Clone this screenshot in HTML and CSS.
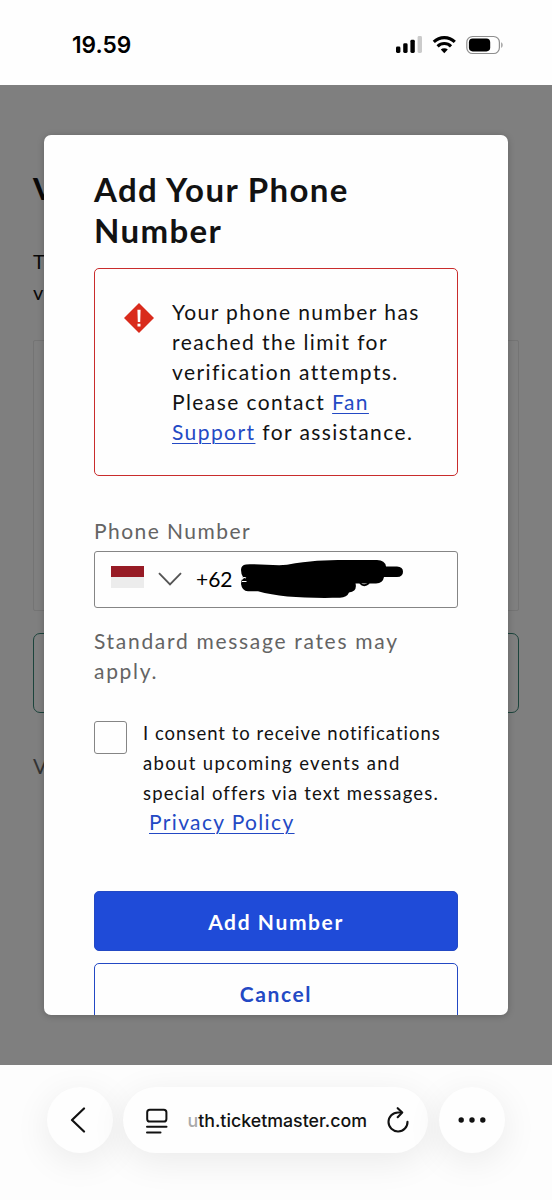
FILE: index.html
```html
<!DOCTYPE html>
<html lang="en">
<head>
<meta charset="utf-8">
<title>Add Your Phone Number</title>
<link rel="stylesheet" href="styles.css">
</head>
<body>
<header class="status">
  <span class="time">19.59</span>
  <svg class="status-icons" width="110" height="20" viewBox="0 0 110 20">
    <rect x="0" y="11.5" width="4.4" height="6.500" rx="1.4"/>
    <rect x="7.200" y="8.3" width="4.4" height="9.700" rx="1.4"/>
    <rect x="14.400" y="4.8" width="4.4" height="13.200" rx="1.4"/>
    <rect x="21.600" y="1" width="4.4" height="17" rx="1.4" fill="#cbcbcb"/>
    <g fill="none" stroke="#000" stroke-width="3.1">
      <path d="M37.800 6.9a15 15 0 0 1 21 0"/>
      <path d="M41.600 11.300a9.500 9.500 0 0 1 13.400 0"/>
    </g>
    <path d="M44.800 14.600a4.900 4.900 0 0 1 7 0L48.300 18.300z"/>
    <rect x="70.800" y="1.500" width="32.600" height="17" rx="5.800" fill="none" stroke="#8e8e8e" stroke-width="1.200"/>
    <rect x="72.900" y="3.600" width="21.300" height="12.800" rx="3.800"/>
    <path d="M105.200 7.200c1.900.6 1.900 5 0 5.600z" fill="#999"/>
  </svg>
</header>

<main class="page">
  <div class="behind">
    <h2 class="behind-title">V</h2>
    <p class="behind-text">T<br>v</p>
    <div class="behind-card"></div>
    <div class="behind-button"></div>
    <p class="behind-note">V</p>
  </div>

  <section class="modal">
    <h1 class="title">Add Your Phone<br>Number</h1>
    <div class="alert">
      <svg class="alert-icon" width="30" height="30" viewBox="0 0 30 30">
        <path d="M15 0 30 15 15 30 0 15z" fill="#d92b1c"/>
        <path d="M13.400 6.800h3.200l-.4 12.200h-2.400z" fill="#fff"/>
        <rect x="13.500" y="20.700" width="3" height="2.800" fill="#fff"/>
      </svg>
      <p class="alert-text">Your phone number has<br>reached the limit for<br>verification attempts.<br>Please contact <a>Fan</a><br><a>Support</a> for assistance.</p>
    </div>
    <label class="label">Phone Number</label>
    <div class="field">
      <span class="flag"></span>
      <svg class="chevron" width="24" height="14" viewBox="0 0 24 14"><path d="M1 1.200 12 12.400 23 1.200" fill="none" stroke="#555" stroke-width="1.900"/></svg>
      <span class="code">+62</span>
      <svg class="scribble" width="164" height="40" viewBox="0 0 164 40">
        <path d="M6 5.500C20 4.500 34 7 47 5.800C70 1.500 85 1 105 1H137Q145 1 146 7.500H157Q163 8 163 12.700Q163 17.800 157 18H144Q143 24 136 24.500H115.500Q117.500 32 109 33.500Q107 38.500 100 38.800C65 39.500 38 38 18 32.300H8Q2 32 1 25Q1 21 3 18Q1 15 1 11Q1 6 6 5.500Z"/>
        <path d="M2 20.500q1.500-3 4-1.500M2 22.500h4.500" fill="none" stroke="#fff" stroke-width="1.100"/>
        <path d="M120 24q4 4.500 9 0" fill="none" stroke="#000" stroke-width="1.800"/>
      </svg>
    </div>
    <p class="hint">Standard message rates may<br>apply.</p>
    <div class="consent">
      <span class="checkbox"></span>
      <div>
        <p class="consent-text">I consent to receive notifications<br><span class="wide">about upcoming events and</span><br><span class="mid">special offers via text messages.</span></p>
        <a class="privacy">Privacy Policy</a>
      </div>
    </div>
    <div class="actions">
      <div class="btn primary">Add Number</div>
      <div class="btn secondary">Cancel</div>
    </div>
  </section>
</main>

<footer class="toolbar">
  <div class="round">
    <svg width="16" height="26" viewBox="0 0 16 26"><path d="M14 1.500 2 13 14 24.500" fill="none" stroke="#111" stroke-width="2.200" stroke-linecap="round" stroke-linejoin="round"/></svg>
  </div>
  <div class="address">
    <svg class="reader" width="22" height="26" viewBox="0 0 22 26" fill="none" stroke="#111" stroke-width="2" stroke-linecap="round">
      <rect x="1.200" y="1.700" width="19.200" height="11.800" rx="2.600"/>
      <path d="M1 18.800H20.500M1 24.500H14.500"/>
    </svg>
    <span class="url"><span class="fade">u</span>th.ticketmaster.com</span>
    <svg class="reload" width="22" height="26" viewBox="0 0 22 26" fill="none" stroke="#111" stroke-width="2.100" stroke-linecap="round" stroke-linejoin="round">
      <path d="M14.500 5.500H11A9.500 9.500 0 1 0 20.500 14.700"/>
      <path d="M10.700 1.200 15.200 5.600 10.700 10.200"/>
    </svg>
  </div>
  <div class="round">
    <svg width="28" height="6" viewBox="0 0 28 6" fill="#111"><circle cx="3.200" cy="3" r="2.700"/><circle cx="14" cy="3" r="2.700"/><circle cx="24.800" cy="3" r="2.700"/></svg>
  </div>
</footer>
</body>
</html>
```
FILE: styles.css
```css
* { box-sizing: border-box; margin: 0; padding: 0; }
body {
  width: 552px;
  height: 1200px;
  overflow: hidden;
  background: #fefefe;
  color: #121212;
  font-family: Lato, "Open Sans", sans-serif;
  font-size: 21px;
  line-height: 30px;
}
.status {
  height: 85px;
  display: flex;
  justify-content: space-between;
  padding: 30px 46px 0 72px;
}
.time {
  font: 600 22.7px/30px Inter, sans-serif;
  color: #000;
}
.status-icons { margin-top: 5px; }

.page {
  position: relative;
  height: 980px;
  background: #7f7f7f;
  overflow: hidden;
}
.behind { padding: 85px 33px 0; }
.behind-title { font-size: 30px; line-height: 36px; font-weight: 900; color: #090909; }
.behind-text { margin-top: 40px; line-height: 31px; color: #090909; font-size: 20px; }
.behind-card { margin-top: 32px; height: 271px; border: 1px solid #747474; border-radius: 2px; }
.behind-button { margin-top: 22px; height: 80px; border: 1.5px solid #1c443c; border-radius: 7px; }
.behind-note { margin-top: 38px; color: #333; }

.modal {
  position: absolute;
  left: 44px;
  top: 50px;
  width: 464px;
  height: 880px;
  padding: 34px 50px 0;
  background: #fefefe;
  border-radius: 7px;
  box-shadow: 0 1px 7px rgba(0, 0, 0, .22);
  overflow: hidden;
}
.title {
  font-size: 33px;
  line-height: 41.300px;
  font-weight: 700;
  letter-spacing: 1.350px;
}
.alert {
  display: flex;
  height: 208px;
  margin-top: 16px;
  padding: 28px 0 0 29px;
  border: 1px solid #c92c2c;
  border-radius: 5px;
}
.alert-icon { margin: 6px 18px 0 0; }
.alert-text { white-space: nowrap; letter-spacing: 1.420px; }
a { color: #2349c4; text-decoration: underline; text-decoration-thickness: 1px; text-underline-offset: 3px; }
.label { display: block; margin-top: 40px; color: #646464; letter-spacing: 1.450px; }
.field {
  display: flex;
  align-items: center;
  height: 57px;
  margin-top: 5px;
  border: 1px solid #858585;
  border-radius: 3px;
  padding-left: 16px;
}
.flag { width: 33px; height: 22px; background: linear-gradient(#971b25 50%, #ececec 50%); margin-top: -4px; }
.chevron { margin-left: 14px; }
.code { margin-left: 14px; width: 44px; color: #000; letter-spacing: 0; }
.scribble { flex: none; }
.hint { margin-top: 18px; color: #646464; letter-spacing: 1.700px; white-space: nowrap; }
.consent { display: flex; margin-top: 32px; }
.checkbox { flex: none; width: 33px; height: 33px; margin-top: 3px; border: 1px solid #858585; border-radius: 3px; }
.consent-text { margin-left: 16px; font-size: 18.500px; letter-spacing: 1px; white-space: nowrap; }
.wide { letter-spacing: 1.350px; }
.mid { letter-spacing: 1.150px; }
.privacy { display: block; margin: -1px 0 0 22px; letter-spacing: 1.350px; }
.actions { display: grid; gap: 12px; margin-top: 54px; }
.btn {
  height: 60px;
  border: 1px solid #2349c4;
  border-radius: 5px;
  line-height: 59px;
  text-align: center;
  font-weight: 700;
  letter-spacing: 1.600px;
}
.primary { background: #1f4bd8; color: #fff; }
.secondary { color: #2349c4; }

.toolbar {
  height: 135px;
  display: flex;
  align-items: flex-start;
  padding: 22px 47px 0;
  background: #fdfdfd;
  overflow: hidden;
}
.round, .address { background: #fefefe; box-shadow: 0 8px 36px rgba(0, 0, 0, .08); }
.round {
  flex: none;
  width: 66px;
  height: 66px;
  border-radius: 33px;
  display: flex;
  align-items: center;
  justify-content: center;
}
.round:first-child svg { margin-right: 4px; }
.address {
  width: 305px;
  height: 66px;
  margin: 0 11px 0 10px;
  border-radius: 33px;
  display: flex;
  align-items: center;
}
.reader { margin: 2px 0 0 23px; }
.url { flex: none; width: 179px; margin: 2px 0 0 19.500px; font: 500 17.800px/26px Inter, sans-serif; white-space: nowrap; }
.fade { color: #aaa; }
.reload { margin-left: 20px; flex: none; }
```
